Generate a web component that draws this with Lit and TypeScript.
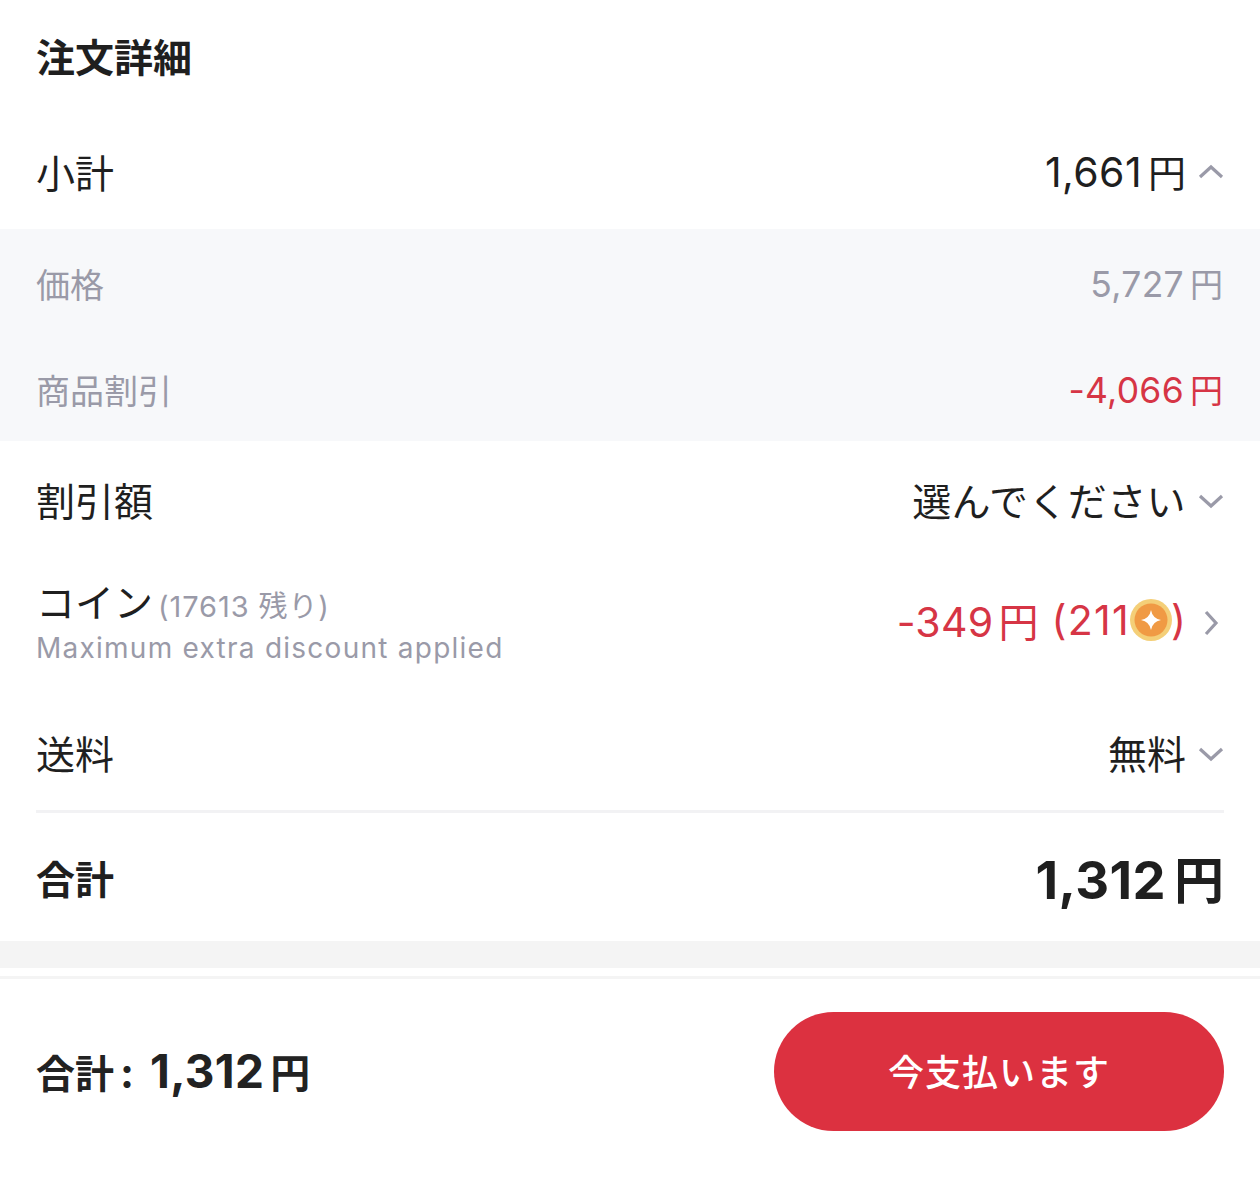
import { LitElement, html, css, svg } from "lit";
import { customElement } from "lit/decorators.js";

const chevron = (d: string) => html`<svg class="chev" viewBox="0 0 26 26" aria-hidden="true"><path d=${d} fill="none" stroke="#9a9aa8" stroke-width="3.2"/></svg>`;
const UP = "M2 19 L13 9 L24 19";
const DOWN = "M2 10 L13 20 L24 10";
const RIGHT = "M8 2 L18 13 L8 24";
const money = (n: string) => html`<span class="num">${n}</span><span class="yen">円</span>`;

@customElement("app-root")
export class AppRoot extends LitElement {
  static styles = css`
    :host { display: block; width: 1260px; height: 1200px; background: #fff; overflow: hidden;
      font-family: "Inter", "Noto Sans CJK JP", sans-serif; color: #1f1f1f; }
    .title { height: 116px; box-sizing: border-box; padding: 0 36px 6px; display: flex; align-items: center; font-size: 39px; font-weight: 700; }
    .row { display: flex; justify-content: space-between; align-items: center; padding: 0 36px 4px; font-size: 39px; box-sizing: border-box; }
    .right { display: flex; align-items: center; gap: 12px; }
    .chev { width: 26px; height: 26px; flex: none; }
    .num { font-size: 41px; letter-spacing: 0.4px; }
    .yen { margin-left: 6px; font-size: 38px; }
    .sub1 { height: 113px; }
    .band { background: #f7f8fa; height: 212px; display: flex; flex-direction: column; }
    .band .row { flex: 1; font-size: 34px; color: #9a9aa8; padding-top: 4px; padding-bottom: 2px; padding-right: 37px; }
    .band .num { font-size: 35.5px; letter-spacing: 0.3px; }
    .band .yen { font-size: 33px; margin-left: 6px; }
    .band .red { color: #d63545; }
    .disc { height: 122px; padding-bottom: 6px; }
    .choose { letter-spacing: 0.4px; }
    .coin { height: 130px; padding-bottom: 10px; }
    .coinleft { display: flex; flex-direction: column; }
    .cointop { display: flex; align-items: baseline; gap: 5px; line-height: 46px; }
    .cointop small { font-size: 29px; color: #9a9aa8; letter-spacing: 0.9px; }
    .note { font-size: 28px; color: #9a9aa8; line-height: 36px; letter-spacing: 1.25px; }
    .coinval { display: flex; align-items: center; color: #d63545; font-size: 41px; padding-bottom: 6px; }
    .coinval .num { letter-spacing: 0.3px; }
    .coinval .yen { font-size: 40px; margin-left: 5px; }
    .paren { margin-left: 13px; letter-spacing: 1.3px; }
    .coinicon { width: 42px; height: 42px; margin: 0 -1px 0 0; flex: none; }
    .ship { height: 117px; padding-bottom: 0; }
    .hr { height: 3px; background: #f2f2f4; margin: 0 36px; }
    .total { height: 128px; font-weight: 700; padding-bottom: 0; }
    .total .num { font-size: 52.5px; letter-spacing: 0.4px; }
    .total .yen { font-size: 50px; margin-left: 8px; }
    .gap { height: 27px; background: #f4f4f4; }
    .thin { height: 3px; background: #f4f4f4; margin-top: 8px; }
    .foot { display: flex; justify-content: space-between; align-items: center; padding: 33px 36px 0; }
    .sum { display: flex; align-items: baseline; font-weight: 700; color: #222; padding-bottom: 2px; }
    .sum .lab { font-size: 39px; margin-right: 16px; }
    .colon { font-size: 42px; margin-left: 6px; }
    .sum .num { font-size: 46px; letter-spacing: 0.3px; }
    .sum .yen { font-size: 40px; margin-left: 6px; }
    .pay { width: 450px; height: 119px; border-radius: 60px; background: #dc3140; color: #fff;
      display: flex; align-items: center; justify-content: center; font-size: 36px; font-weight: 500; letter-spacing: 1px; padding-bottom: 4px; box-sizing: border-box; }
  `;

  render() {
    return html`
      <div class="title">注文詳細</div>
      <div class="row sub1"><span>小計</span><span class="right"><span>${money("1,661")}</span>${chevron(UP)}</span></div>
      <div class="band">
        <div class="row"><span>価格</span><span>${money("5,727")}</span></div>
        <div class="row"><span>商品割引</span><span class="red">${money("-4,066")}</span></div>
      </div>
      <div class="row disc"><span>割引額</span><span class="right"><span class="choose">選んでください</span>${chevron(DOWN)}</span></div>
      <div class="row coin">
        <div class="coinleft">
          <div class="cointop"><span>コイン</span><small>(17613 残り)</small></div>
          <div class="note">Maximum extra discount applied</div>
        </div>
        <div class="right">
          <span class="coinval"><span>${money("-349")}</span><span class="paren">(211</span><svg class="coinicon" viewBox="0 0 42 42" aria-hidden="true">
            ${svg`<circle cx="21" cy="21" r="21" fill="#f4cf78"/><circle cx="21" cy="21" r="16.5" fill="#f09a44"/>
            <path d="M21 11 Q22.5 19.5 31 21 Q22.5 22.5 21 31 Q19.5 22.5 11 21 Q19.5 19.5 21 11Z" fill="#fff"/>`}
          </svg>)</span>
          ${chevron(RIGHT)}
        </div>
      </div>
      <div class="row ship"><span>送料</span><span class="right"><span>無料</span>${chevron(DOWN)}</span></div>
      <div class="hr"></div>
      <div class="row total"><span>合計</span><span>${money("1,312")}</span></div>
      <div class="gap"></div>
      <div class="thin"></div>
      <div class="foot">
        <div class="sum"><span class="lab">合計<span class="colon">:</span></span>${money("1,312")}</div>
        <div class="pay">今支払います</div>
      </div>
    `;
  }
}
